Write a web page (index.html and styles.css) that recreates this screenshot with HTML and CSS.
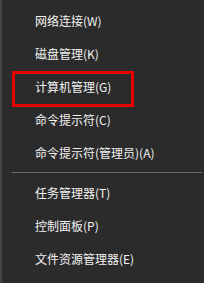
FILE: index.html
```html
<!DOCTYPE html>
<html>
<head>
<meta charset="utf-8">
<link rel="stylesheet" href="styles.css">
</head>
<body>
<div class="menu">
  <div class="item">网络连接(W)</div>
  <div class="item">磁盘管理(K)</div>
  <div class="item">计算机管理(G)</div>
  <div class="item">命令提示符(C)</div>
  <div class="item">命令提示符(管理员)(A)</div>
  <div class="sep"></div>
  <div class="item">任务管理器(T)</div>
  <div class="item">控制面板(P)</div>
  <div class="item">文件资源管理器(E)</div>
  <div class="mark"></div>
</div>
</body>
</html>
```
FILE: styles.css
```css
html, body {
  margin: 0;
  padding: 0;
  background: #2b2b2b;
}
.menu {
  position: relative;
  width: 202px;
  height: 283px;
  box-sizing: border-box;
  background: #2b2b2b;
  border-left: 2px solid #434343;
  padding-top: 4px;
  font-family: "Noto Sans CJK SC", "Noto Sans", sans-serif;
  font-size: 12px;
  color: #f2f2f2;
  display: flex;
  flex-direction: column;
}
.item {
  height: 33px;
  line-height: 33px;
  padding-left: 33px;
  white-space: nowrap;
}
.sep {
  height: 1px;
  margin: 3px 0 3px 10px;
  background: #6a6a6a;
}
.mark {
  position: absolute;
  left: 10px;
  top: 71px;
  width: 116px;
  height: 30px;
  border: 3px solid #e60000;
}
```
